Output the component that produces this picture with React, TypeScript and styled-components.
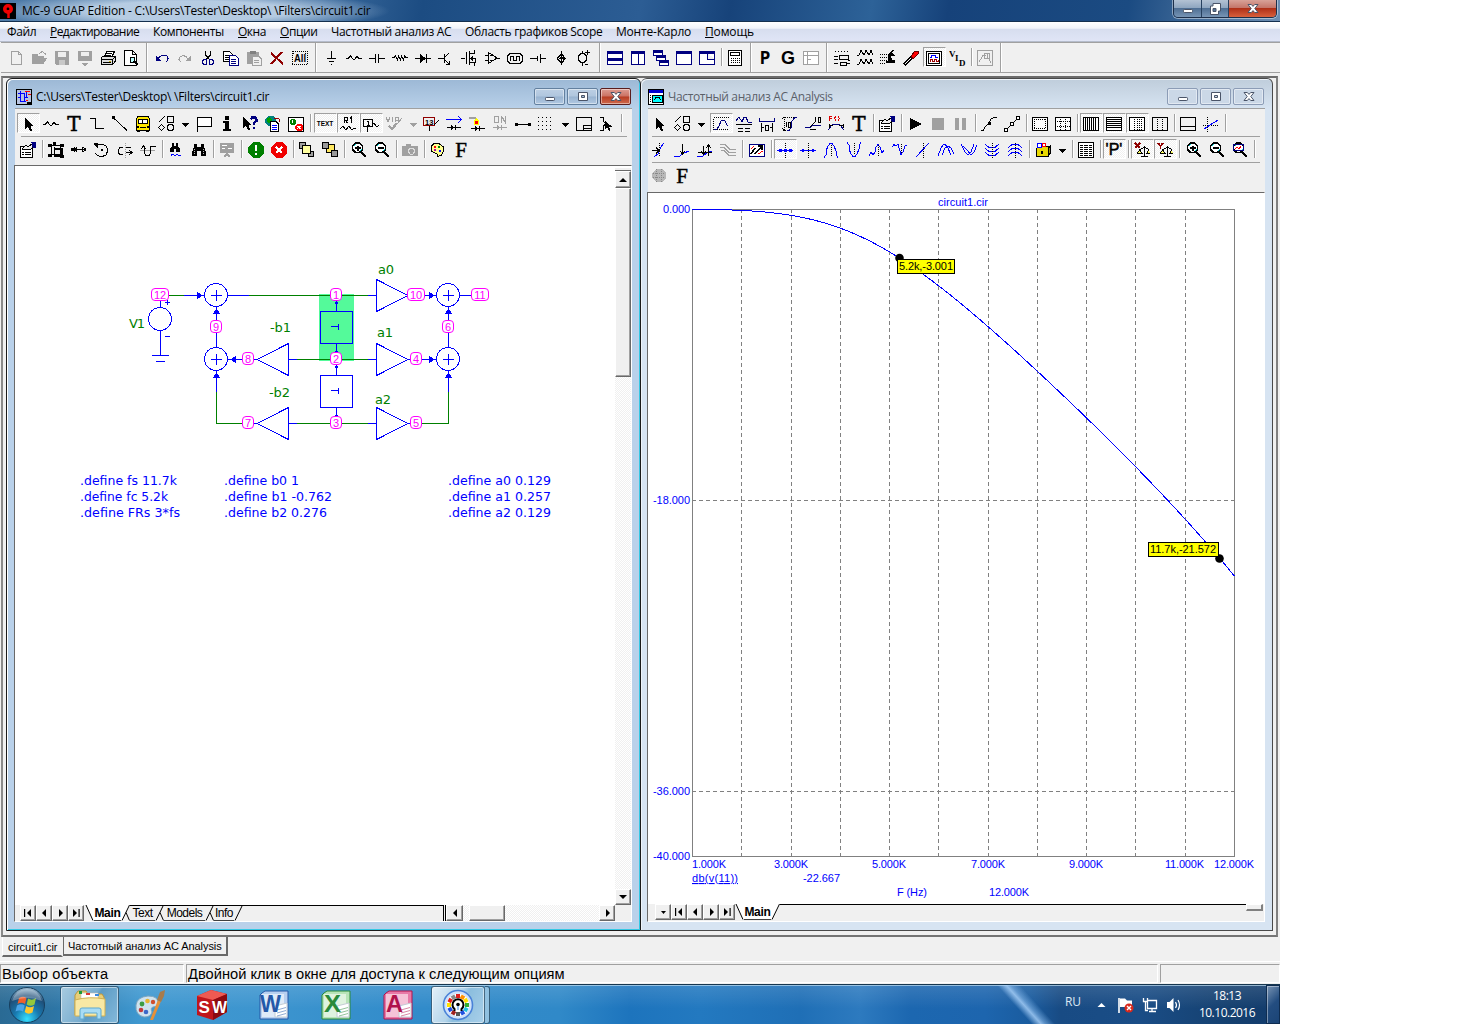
import React from "react";
import styled, { createGlobalStyle, css } from "styled-components";

const UI = `"Open Sans", "Noto Sans", sans-serif`;
const ARIAL = `"Liberation Sans", Arial, sans-serif`;
const FACE = "#f0f0f0";
const NAVY = "#000080";
const BLUE = "#0000ff";
const GREY = "#a0a0a0";
const GREEN = "#008000";

const Global = createGlobalStyle`
  body { margin: 0; background: #fff; }
  * { box-sizing: border-box; }
  svg { display: block; flex: none; }
`;

/* ---------- glyphs ---------- */
type Stroke = [d: string, stroke?: string, fill?: string, width?: number];

const magnifier: Stroke[] = [
  ["M4.500 1H8.500L11.500 4V7.500L8.500 10.500H4.500L1.500 7.500V4Z", "#000", "#fff", 1.7],
  ["M3 4L5 2.500M9 9L10.500 7.500", "#00d8d8"],
  ["M10 10L15 15", "#000", "none", 2.6],
];
const paper: Stroke[] = [["M3.500 1.500H10.500L13.500 4.500V14.500H3.500ZM10.500 1.500V4.500H13.500", GREY, FACE]];
const propSheet: Stroke[] = [
  ["M.5 4.500H12.500V15.500H.5Z", "#000", "#fff"],
  ["M5 10.500H11M5 12.500H11M2 10.500H4M2 12.500H4"],
  ["M2 7L6 3L8 5L13 1L15 3L11 7L7 8Z", "#000", "#eee"],
  ["M12 .5H16V5H13Z", NAVY, NAVY],
];
const binoc: Stroke[] = [["M3 2H6V5H10V2H13V5L15 10V14H10V9H6V14H1V10L3 5Z", "none", "#000"], ["M3.500 7V12M12.500 7V12", "#bbb", "none", -2]];
const shapes: Stroke[] = [
  ["M9.500 .5H15.500V6.500H9.500Z"],
  ["M.5 6.500L6.500 .5"],
  ["M.5 11.500L3.500 8.500L6.500 11.500L3.500 14.500Z"],
  ["M11 8.500H14L15.500 10V13L14 14.500H11L9.500 13V10Z"],
];
const cursor: Stroke[] = [["M5 1L5 13L8 10.500L10 15H12L10.500 10H13.500Z", "none", "#000"]];
const scales: Stroke[] = [["M10.500 4V14M7 14.500H14M6 7.500L10.500 5L15 7.500"], ["M5.500 8L3.500 11H8ZM14.500 8L13 11H16", "#000", "#ffff60"]];

const glyphs: Record<string, Stroke[]> = {
  new: paper,
  open: [["M1.500 13.500V4.500H6L7.500 6.500H12.500V8.500M1.500 13.500L5 8.500H15.500L12 13.500Z", GREY, GREY], ["M8 4L11 1.500L14 3.500V5", GREY]],
  save: [["M1 1H15V15H2L1 14Z", "none", GREY], ["M4 2H12V7H4Z", "none", "#eee"], ["M5 10H11V15H5Z", "none", "#c8c8c8"]],
  saveAs: [["M1 1H15V11H1Z", "none", GREY], ["M4 2H12V6H4Z", "none", "#eee"], ["M4 13H12L8 16Z", "none", GREY]],
  print: [["M4.500 6.500L7 1.500H14.500L12 6.500Z", "#000", "#fff"], ["M1.500 7.500L4 6H15.500V11L12.500 14.500H1.500Z", "#000", "#ddd"], ["M1 9.500H12.500L15 7M12.500 9V14M3 12.500H11M7 3.500H12M6 5.500H11", "#000"], ["M9 11.500H11", "#c8b400"]],
  preview: [["M1.500 .5H9.500L13.500 4.500V15.500H1.500ZM9.500 .5V4.500H13.500", "#000", "#fff"], ["M7.500 7.500H11.500V12.500H7.500Z", "#000", "#bff"], ["M11 11L15 15", "#000", "none", 2]],
  undo: [["M3 10L6 6.500L9 5L13 6L14 8.500L12.500 12", NAVY], ["M2 5L7 10.500H2Z", "none", NAVY]],
  redo: [["M12 10L9 6.500L6 5.500L3 7L2 9.500L4 12", GREY], ["M14 5L9 10.500H14Z", "none", GREY]],
  cut: [["M5.500 1V5L10 10M10.500 1V5L6 10", "#000", "none", 1.3], ["M4 9.500H6.500V14.500H4L2.500 13V11ZM9.500 9.500H12L13.500 11V13L12 14.500H9.500Z", NAVY, "none", 1.3]],
  copy: [["M.5 1.500H6.500L9.500 4.500V11.500H.5Z", "#000", "#fff"], ["M2 5.500H6M2 7.500H6M2 9.500H6"], ["M6.500 5.500H12.500L15.500 8.500V15.500H6.500Z", NAVY, "#fff"], ["M8 9.500H13M8 11.500H13M8 13.500H13", NAVY]],
  paste: [["M1 2H13V14H1Z", "none", GREY], ["M4 1H10V4H4Z", "none", "#808080"], ["M6.500 6.500H13L15.500 9V15.500H6.500Z", GREY, FACE], ["M8 10.500H13M8 12.500H13", GREY]],
  del: [["M2 3L14 14M13 2L2 14", "#900000", "none", 2]],
  ground: [["M8.500 1V8M4 8.500H13M6 11.500H11M8 14.500H9"]],
  resistor: [["M0 8.500H2L4.500 6L8 10L11 6.500L13 8.500H16"]],
  cap: [["M0 8.500H6M10 8.500H16M6.500 4V13M9.500 4V13"]],
  coil: [["M0 7.500H2L3.500 6L5.500 10L6.500 6L8.500 10L9.500 6L11.500 10L12.500 6L14 7.500H16"]],
  diode: [["M0 8.500H16M11.500 4V13"], ["M5 4L11 8.500L5 13Z", "none", "#000"]],
  bjt: [["M0 8.500H6M6.500 4V13M7 7L11 3M7 10L11 14M11.500 11V14.500H8"]],
  mos: [["M0 8.500H4M5.500 2V14M8.500 1V15M9 3.500H13V0M9 8.500H15M9 12.500H13V16M14.500 8V13"], ["M9 8.500L12 6V11Z", "none", "#000"]],
  opamp: [["M4.500 2.500V13.500L13 8Z"], ["M1 5.500H4M1 10.500H4M13 8.500H16M6 5.500H8M6 10.500H8"]],
  pulse: [["M3 3.500H13L15.500 6V11L13 13.500H3L.5 11V6Z"], ["M3.500 11V6.500H6.500V10.500H9.500V6.500H12.500V11"]],
  batt: [["M0 8.500H7M10 8.500H16M7.500 6V11M10.500 4V13"]],
  isrc: [["M8.500 1V15"], ["M8.500 4L12 8.500L8.500 13L4.500 8.500Z", "#000", "none", 1.4], ["M8.500 5L11 9H6Z", "none", "#000"]],
  vsrc: [["M6.500 3V1M6.500 13V16M5 3.500H8L10.500 6V10L8 12.500H5L2.500 10V6ZM9 2.500H14M11.500 0V5M9 14.500H12"]],
  tileH: [["M.5 1.500H15.500V14.500H.5Z", NAVY, "#fff"], ["M0 2H16M0 9H16", NAVY, "none", 3]],
  tileV: [["M1.500 1.500H14.500V14.500H1.500ZM8 2V14", NAVY, "#fff"], ["M1 2.500H15", NAVY, "none", 3]],
  cascade: [["M.5 .5H9.500V5.500H.5Z", NAVY, "#fff"], ["M0 1.500H10", NAVY, "none", 3], ["M3.500 5.500H12.500V10.500H3.500Z", NAVY, "#fff"], ["M3 6.500H13", NAVY, "none", 3], ["M6.500 10.500H15.500V15.500H6.500Z", NAVY, "#fff"], ["M6 11.500H16", NAVY, "none", 3]],
  maxi: [["M.5 1.500H15.500V14.500H.5Z", NAVY, "#fff"], ["M0 2.500H16", NAVY, "none", 3]],
  split: [["M.5 1.500H15.500V14.500H.5ZM8.500 3V9.500H16", NAVY, "#fff"], ["M0 2.500H16", NAVY, "none", 3]],
  calc: [["M1.500 .5H14.500V15.500H1.500Z", "#000", "#fff"], ["M3.500 2.500H12.500V5.500H3.500Z"], ["M4 8.500H13M4 10.500H13M4 12.500H13", "#000", "none", -2]],
  panel: [["M.5 1.500H15.500V14.500H.5ZM1 5.500H15M4.500 2V14M4.500 9.500H8", GREY, "#fff"]],
  list: [["M1 1.500H16", "#000", "none", -3], ["M5.500 5.500H14.500V9.500H5.500ZM6.500 12.500H12.500V15.500H6.500Z"], ["M0 6.500H4M0 9.500H4M0 13.500H4M12 13.500H16M14 10.500H16"]],
  waves: [["M0 5.500L2 5L4 .5L7 5L9 .5L12 5L14 .5L16 5M0 14.500L2 14L4 9.500L7 14L9 9.500L12 14L14 9.500L16 14"]],
  plug: [["M8 4L12 0H14L12 3L15 6H11L12 10H15V13H6V11H8Z", "none", "#000"], ["M0 4.500H7M0 7.500H7M0 10.500H7M0 13.500H6", "#000", "none", -2]],
  probe: [["M1 15L9 7", "#000", "none", 3], ["M2 14L8 8", "#fff"], ["M8 6L12 1H15V4L10 9Z", "#600", "#f00"]],
  scope: [["M.5 1.500H15.500V15.500H.5Z", "#000", "#fff"], ["M2.500 3.500H13.500V13.500H2.500Z", "#000", "#fff"], ["M4 7.500H5.500V5.500H9.500V7.500H12", BLUE], ["M4 11.500V9.500H6V11.500H8V9.500H10V11.500H12V9.500", "#a00000"]],
  stamp: [["M.5 .5H15.500V15.500H.5ZM2 12L6 5.500H9M7.500 3.500H12.500V8.500H7.500ZM12 9L14 13M10 8V4", GREY]],
  cursor,
  wire: [["M.5 2.500H6.500V12.500H15"]],
  line: [["M0 .5L15 14.500", "#000"], ["M0 0H3V3H0Z", "none", "#000"]],
  bus: [["M2.500 .5H13.500L14.500 3V14H1.500V3Z", "#000", "#ffe800"], ["M3.500 3.500H12.500V7.500H3.500Z", "#000", "#fff"], ["M7.500 3V8M5 11.500H11", "#000"], ["M2 10H4V12H2ZM12 10H14V12H12ZM2 14H5V16H2ZM11 14H14V16H11Z", "none", "#000"]],
  shapes,
  flag: [["M1.500 16V1.500H15.500V10.500H2", "#000", "#fff"]],
  info: [["M6 0H10V4H6ZM4 5H10V13H12V15H4V13H6V7H4Z", "none", "#000"]],
  help: [["M1 0V12L4 9.500L6 14H8L6.500 9H9Z", "none", "#000"], ["M9 3.500L10 1.500H13.500L14.500 3V5L12 7V9", NAVY, "none", 2.2], ["M11 11H13V13H11Z", "none", NAVY]],
  globeDoc: [["M3 0H9L11 3V8L8 10H3L0 7V3Z", "none", "#008080"], ["M2 2L5 1L7 4L4 7L2 6Z", "none", "#00a000"], ["M5.500 5.500H11L13.500 8V15.500H5.500Z", "#000", "#fff"], ["M7 9.500H12M7 11.500H12M7 13.500H12", BLUE], ["M9 2L14 3L15 6", "#900"]],
  checks: [["M.5 1.500H15.500V15.500H.5Z", "#000", "#fff"], ["M3 3H6L8 5V7L6 9H3L2 7V5Z", "none", GREEN], ["M9 8H13L15 10V13L13 15H9L7 13V10Z", "none", "#f00"], ["M9 10L13 13M13 10L9 13M4.500 4V7", "#fff"]],
  viewR: [["M0 13L3 10L6 14L9 10L12 14L14 12H16"], ["M4.500 7V1.500H7V4H5L7.500 7M10 2.500L11.500 1V7"]],
  node: [["M.5 3.500H9.500V10.500H.5ZM4.500 11V16M5.500 5V9M4 9.500H7M4 5.500H5", "#000"], ["M9 9L11 7L14 11L16 9"]],
  nodeNum: [["M.5 1.500H11.500V9.500H.5Z", "#900000", "none", 1.4], ["M6.500 10V15M11 9L16 4", "#000"]],
  vip: [["M3 10L6 13L11 7", GREY, "none", 2.4], ["M0 1L2 6L4 1M6.500 1V6M9.500 6V1.500H12V4H10M16 2L11 8", GREY]],
  curr: [["M0 3.500H15M12 0L15.500 3.500L12 7", BLUE, "none", 1.4], ["M1 11.500H15M9.500 9V14", "#000"], ["M5 9L9 11.500L5 14Z", "none", "#000"]],
  power: [["M0 1.500H5L8 4", GREY, "none", 2], ["M7 2L10 5V9H5V5Z", "none", "#ff0"], ["M6 5H9V8H6Z", "none", "#f00"], ["M2 12.500H16M10.500 10V15"], ["M6 10L10 12.500L6 15Z", "none", "#000"]],
  on: [["M2.500 .5H6.500V6.500H2.500ZM9.500 7V.5L13.500 6.500V0", GREY, "none", 1.4], ["M1 11.500H15M9.500 9V14", GREY], ["M5 9L9 11.500L5 14Z", "none", GREY]],
  seg: [["M1 8.500H15"], ["M0 7H3V10H0ZM13 7H16V10H13Z", "none", "#000"]],
  dots: [["M0 1.500H17M0 5.500H17M0 9.500H17M0 13.500H17", "#000", "none", -4]],
  region: [["M.5 1.500H15.500V14.500H.5ZM7.500 15V9.500H15M8 12.500H15", "#000"]],
  pick: [["M1 1H4V5L7 8L4 10V14H1", "#000"], ["M6 5V13L8 11.500L10 15L11.500 14L10 10.500H13Z", "none", "#000"]],
  props: propSheet,
  group: [["M3.500 3.500H12.500V12.500H3.500ZM6.500 5V14H14V7H6", "#000", "none", 1.3], ["M0 2H4V5H0ZM12 2H16V5H12ZM0 12H4V15H0ZM12 13H16V16H12ZM5 0H8V3H5Z", "none", "#000"]],
  flipX: [["M1 7.500H15M5 5V10M11 5V10", "#000"], ["M3 5L7 7.500L3 10ZM13 5L9 7.500L13 10ZM0 6H3V9H0ZM12 6H15V9H12Z", "none", "#000"]],
  rotate: [["M4 3L8 2L12 4L14 8L12 13L7 15L3 13L1 11"], ["M0 1H4V6L0 3ZM7 7H9V9H7Z", "none", "#000"]],
  flipA: [["M8.500 1V16", GREY, "none", -2], ["M6 5.500H3L1.500 8V11L3 12.500H6M9 10.500H15M12 8L15 10.500L12 13M9 5.500H14"]],
  flipB: [["M0 8.500H15", GREY], ["M1 7L3.500 4L6 7M4.500 5V11L6 13.500H9L10.500 11V5L12 4H16"]],
  find: [["M4 1H6V4H8V1H10V4L12 7V10H8V7H6V10H2V7L4 4Z", "none", "#000"], ["M3 13.500L5 12L7 14L9 12L11 14L13 13", BLUE]],
  binoc,
  board: [["M1 1H15V11H1Z", "none", GREY], ["M3 3.500H8M3 6.500H6M9 6.500H13", "#fff"], ["M8 11V13M5 15L8 12L11 15", GREY, "none", 2]],
  ok: [["M5 0H11L16 5V11L11 16H5L0 11V5Z", "none", GREEN], ["M8 3V9", "#fff", "none", 2.5], ["M7 11H9V13H7Z", "none", "#fff"]],
  bad: [["M5 0H11L16 5V11L11 16H5L0 11V5Z", "none", "#f00000"], ["M5 5L11 11M11 5L5 11", "#fff", "none", 2]],
  front: [["M9.500 9.500H14.500V14.500H9.500Z", "#000", GREY], ["M.5 .5H6.500V6.500H.5Z", "#000", GREY], ["M3.500 3.500H11.500V11.500H3.500Z", "#000", "#ffffa0"]],
  back: [["M4.500 2.500H12.500V10.500H4.500Z", "#000", "#ffe860"], ["M.5 .5H6.500V6.500H.5ZM9.500 8.500H15.500V14.500H9.500Z", "#000", "#999"]],
  zoomIn: [...magnifier, ["M4 6H9.500M6.700 3.500V8.500", "#000", "none", 1.6]],
  zoomOut: [...magnifier, ["M4 6H9.500", "#000", "none", 1.6]],
  zoomFit: [...magnifier, ["M1.500 2.500H11.500V8.500H1.500Z", NAVY], ["M3 7L5 5L7 7L9 4", "#f00"]],
  camera: [["M0 4H4V2H9V4H16V14H0Z", "none", GREY], ["M8.500 6H11L12.500 8V10L11 12H8L6.500 10V8Z", "#ddd"]],
  palette: [["M4 1.500H9L13.500 5V9L11.500 13L8 14.500L7 12L4 10.500L1.500 9V4Z", "#000", "#ffff90"], ["M4 4H6V6H4Z", "none", "#f00"], ["M8 4H10V6H8Z", "none", GREEN], ["M9 8H11V10H9Z", "none", BLUE], ["M4 7H6V9H4Z", "none", "#a0a"]],
  scaleMode: [["M.5 13.500V1.500H15.500M2 13.500H15", "#000", "none", -2], ["M1 13L4 13L6 10L8 5L10 4L12 5L14 9L15 10", NAVY]],
  cursorMode: [["M0 5L3 1L6 6L8 1L10 1L12 6H16", NAVY], ["M0 8.500H16M2 12.500H7M9 12.500H14M2 15.500H7M9 15.500H14"]],
  hTag: [["M.5 2V5.500H15.500V2", NAVY], ["M2.500 7V16M13.500 7V16M3 11.500H5M11 11.500H13"], ["M6.500 9.500H9.500V14.500H6.500Z"]],
  vTag: [["M15 1.500H13L10 5L9 12L7 14.500H5", NAVY], ["M2.500 1V15M0 3L2.500 1L5 3M0 12L2.500 15L5 12M3 1.500H12", "#000", "none", -2], ["M4.500 6V11M6.500 6.500H8.500V11H6.500Z"]],
  ptTag: [["M0 11.500H5L8 9H16", NAVY], ["M5 13.500H11M5 11L10 6M10.500 1V6M13.500 1.500H15.500V6H13.500Z"]],
  fTag: [["M0 14L4 9L8 8L12 9L16 14", NAVY], ["M1 8V12M1 9.500H5M15 8V12M11 9.500H15"], ["M1.500 5V.5H4M2 2.500H4M8 0L6.500 2.500L8 5M10 0L11.500 2.500L10 5", "#e00000"]],
  play: [["M3 2L15 8L3 14Z", "none", "#000"]],
  stop: [["M2 2H14V14H2Z", "none", GREY]],
  pause: [["M2 2H6V14H2ZM9 2H13V14H9Z", "none", GREY]],
  curve: [["M0 14.500H2L4 11L8 7L10 3L13 1.500H16"], ["M7 6H10V9H7Z", "none", "#000"]],
  curvePts: [["M2 14L14 2"], ["M.5 12.500H3.500V15.500H.5ZM6.500 6.500H9.500V9.500H6.500ZM12.500 .5H15.500V3.500H12.500Z", "#000", "#fff"]],
  ruler: [["M.5 1.500H15.500V14.500H.5Z", "#000", "#fff", 1.6], ["M2 3.500H14M2 12.500H14M2.500 3V13M13.500 3V13", "#000", "none", -2]],
  plusGrid: [["M.5 1.500H15.500V14.500H.5Z", "#000", "#fff"], ["M0 5.500H16M0 10.500H16M5.500 1V15M10.500 1V15", "#000", "none", -2]],
  gridV: [["M.5 1.500H15.500V14.500H.5ZM2.500 1V15M4.500 1V15M6.500 1V15M8.500 1V15M10.500 1V15M12.500 1V15", "#000", "#fff"]],
  gridH: [["M.5 1.500H15.500V14.500H.5ZM0 3.500H16M0 5.500H16M0 7.500H16M0 9.500H16M0 11.500H16", "#000", "#fff"]],
  gridDot: [["M.5 1.500H15.500V14.500H.5Z", "#000", "#fff"], ["M5.500 1V15M8.500 1V15M10.500 1V15M12.500 1V15", "#000", "none", -2]],
  gridDash: [["M.5 1.500H15.500V14.500H.5Z"], ["M5.500 1V15M10.500 1V15", "#000", "none", -2]],
  baseline: [["M.5 1.500H15.500V14.500H.5ZM1 10.500H15"]],
  hCursor: [["M4.500 1V16M0 9.500H16", "#000", "none", -2], ["M1 13L7 9L15 4", BLUE]],
  goX: [["M3 15L7 12L10 5L13 1", BLUE], ["M8.500 1V15", "#000", "none", -2], ["M1 8.500H8M5 5.500L8 8.500L5 11.500"]],
  goY: [["M0 14.500H5L10 11L15 9", BLUE], ["M8.500 2V12M6 9L8.500 12L11 9"]],
  goXY: [["M0 14.500H5L10 11L15 9", BLUE], ["M6.500 4V12M4 9L6.500 12L9 9M11.500 3V14M9 6L11.500 3L14 6M1 10.500H15"]],
  branch: [["M0 2.500H5L10 7.500H16M0 5.500H4L9 10.500H16M1 8.500H4L9 13.500H16", GREY]],
  anim: [["M.5 2.500H15.500V14.500H.5Z", NAVY, "#fff", 1.6], ["M2 12L6 6M6 12L13 4M9 4H13V8", "#000", "none", 1.6], ["M2 7L5 4M9 12L14 9", "#f00"]],
  trackPts: [["M8.500 1V16", "#000", "none", -2], ["M0 8.500H16", BLUE], ["M2 7H5V10H2ZM7 7H10V10H7ZM12 7H15V10H12Z", "none", BLUE]],
  trackPt: [["M8.500 1V16", "#000", "none", -2], ["M0 8.500H16", BLUE], ["M2 7H4V10H2ZM12 7H14V10H12Z", "none", BLUE]],
  peak: [["M1 15.500L3 13V9L5 4L7 1.500H9L11 4L13 9V13L15 15.500", BLUE], ["M8.500 3V15", "#000", "none", -2]],
  valley: [["M1 .5L3 3V7L5 12L7 14.500H9L11 12L13 7V3L15 .5", BLUE], ["M8.500 1V13", "#000", "none", -2]],
  high: [["M0 13.500L2 10L4 13L6 10L7 5L9 2.500L11 5L13 11L15 8", BLUE], ["M9.500 3V14", "#000", "none", -2]],
  low: [["M0 5L2 2.500L4 4L6 2.500L7 6L9 12.500L11 10L13 4L15 3", BLUE], ["M9.500 2V12", "#000", "none", -2]],
  inflect: [["M1 15L14 1", BLUE], ["M8.500 1V16", "#000", "none", -2]],
  gHigh: [["M0 14L3 6L6 2L9 4L13 13M4 13L7 6L10 4L13 6L16 12", BLUE]],
  gLow: [["M0 2L4 10L7 13L10 10L13 2M2 4L6 8L10 13L13 10L16 3", BLUE]],
  lowSet: [["M1 2L5 5.500H11L15 2M1 6L5 9.500H11L15 6M1 10L5 13.500H11L15 10", BLUE], ["M8.500 1V16", "#000", "none", -2]],
  highSet: [["M1 6L5 2.500H11L15 6M1 10L5 6.500H11L15 10M1 14L5 10.500H11L15 14", BLUE], ["M8.500 1V16", "#000", "none", -2]],
  cube: [["M1.500 6.500L4 4H15L13 6.500V14.500H1.500Z", "#000", "#e8d800"], ["M13 7L15.500 4V11L13 14Z", "#000", "#a09000"], ["M2 1H6V5H2Z", BLUE, "#fff"], ["M7 1H10V4H7Z", "#f00", "#fff"], ["M6 9H8V12H6Z", "none", "#000"]],
  table: [["M.5 .5H15.500V15.500H.5Z", "#000", "#fff"], ["M2 3.500H5M6 3.500H10M11 3.500H14M2 5.500H5M6 5.500H10M11 5.500H14M2 7.500H5M6 7.500H10M11 7.500H14M2 9.500H5M6 9.500H10M11 9.500H14M2 11.500H5M6 11.500H10M11 11.500H14M2 13.500H5M6 13.500H10M11 13.500H14"]],
  scaleX: [["M1 1L6 6M6 1L1 6", "#900000", "none", 1.8], ...scales],
  scaleY: [["M1 1L3.500 4L6 1M3.500 4V7", "#900000", "none", 1.8], ...scales],
  globe: [["M5 1H11L15 5V10L11 14H5L1 10V5Z", "none", "#b8b8b8"], ["M2 5.500H14M2 9.500H14M5.500 1V14M10.500 1V14", "#888", "none", -2]],
  drop: [["M5 7H12L8.500 11Z", "none", "#000"]],
  dropOff: [["M5 7H12L8.500 11Z", "none", GREY]],
  circuitApp: [["M.5 .5H15.500V15.500H.5Z", "#000", "#b8c4e0"], ["M2 4.500H8V12M4.500 2V12H10M8 8.500H12M10.500 3V9M2 8.500H5", BLUE], ["M9 2.500H14M12 5.500H15M10 11.500H12", "#f00"], ["M11 13H15V15H11Z", "none", "#000"]],
  chartApp: [["M.5 .5H15.500V15.500H.5Z", "#000", "#fff"], ["M1 1H15V4H1Z", "none", "#0000d0"], ["M4.500 6.500H14.500V13.500H4.500Z", "#000", "#0ff"], ["M6 11L8 8.500H11L13 11", "#000"], ["M2.500 6V14", "#000", "none", -2]],
};

const Letter = styled.span<{ $px: number; $family: string; $weight?: number }>`
  width: 16px;
  height: 16px;
  display: flex;
  align-items: center;
  justify-content: center;
  font: ${(p) => p.$weight ?? 700} ${(p) => p.$px}px/16px ${(p) => p.$family};
  white-space: nowrap;
  color: #000;
  -webkit-text-stroke: ${(p) => (p.$weight ? 0.5 : 0)}px #000;
`;
const lettered: Record<string, [text: string, px: number, family: string, weight?: number]> = {
  P: ["P", 17.5, `"DejaVu Sans Mono", "DejaVu Sans", sans-serif`],
  G: ["G", 18, ARIAL],
  F: ["F", 21, `"Liberation Serif", serif`, 400],
  T: ["T", 20, `"DejaVu Serif", serif`, 400],
  TEXT: ["TEXT", 6.5, ARIAL],
  "'P'": ["'P'", 16, ARIAL, 400],
};
const VidMark = styled.svg`
  font: bold 9px "Liberation Serif", serif;
`;

function Glyph({ name }: { name: string }) {
  const l = lettered[name];
  if (l) return <Letter $px={l[1]} $family={l[2]} $weight={l[3]}>{l[0]}</Letter>;
  if (name === "VID")
    return (
      <VidMark width="17" height="16">
        <text x="0" y="6.500">V</text>
        <text x="6" y="11">I</text>
        <text x="10" y="15.500">D</text>
      </VidMark>
    );
  if (name === "all")
    return (
      <svg width="16" height="16" viewBox="0 0 16 16">
        <path d="M.5 1.500H16M.5 3.500H3M13 3.500H16M0 14.500H16M.5 1V15M15.500 1V15" stroke="#000" strokeDasharray="1 1" shapeRendering="crispEdges" fill="none" />
        <text x="2" y="12" textLength="12" lengthAdjust="spacingAndGlyphs" fontFamily="Liberation Sans" fontWeight="bold" fontSize="10">All</text>
      </svg>
    );
  return (
    <svg width="16" height="16" viewBox="0 0 16 16" shapeRendering="crispEdges">
      {(glyphs[name] ?? []).map(([d, stroke = "#000", fill = "none", w = 1], i) => (
        <path key={i} d={d} stroke={stroke} fill={fill} strokeWidth={w < 0 ? 1 : w} strokeDasharray={w < 0 ? `1 ${Math.max(1, -w - 1)}` : undefined} />
      ))}
      {name === "nodeNum" && <text x="2" y="8.500" fontSize="7.500" fontFamily="Liberation Sans" fontWeight="bold">13</text>}
    </svg>
  );
}

/* ---------- toolbars ---------- */
const Tool = styled.div<{ $w?: number; $on?: boolean }>`
  width: ${(p) => p.$w ?? 23}px;
  height: 20px;
  padding: 3px 0 0 3px;
  flex: none;
  overflow: visible;
  ${(p) =>
    p.$on &&
    css`
      padding: 2px 0 0 2px;
      border: 1px solid #fff;
      border-top-color: #a0a0a0;
      border-left-color: #a0a0a0;
      background: repeating-conic-gradient(#fff 0 25%, #f0f0f0 0 50%) 0 0 / 2px 2px;
    `}
`;
const DropTool = styled(Tool)`
  padding-left: 0;
  overflow: hidden;
  svg { margin-left: -1px; }
`;
const Divider = styled.div<{ $w: number; $tall?: boolean }>`
  flex: none;
  width: ${(p) => p.$w}px;
  height: ${(p) => (p.$tall ? 29 : 18)}px;
  margin-top: ${(p) => (p.$tall ? -4 : 1)}px;
  display: flex;
  justify-content: center;
  &::before {
    content: "";
    width: 2px;
    background: linear-gradient(90deg, #a0a0a0 50%, #fff 50%);
  }
`;

/* "|n" is a divider n px wide, "||n" a full-height one, "+x" a pressed tool, "drop:n" a menu arrow */
function Tools({ items }: { items: string }) {
  return (
    <>
      {items.split(" ").map((t, i) => {
        if (t.startsWith("||")) return <Divider key={i} $w={+t.slice(2)} $tall />;
        if (t.startsWith("|")) return <Divider key={i} $w={+t.slice(1)} />;
        if (t.startsWith("drop")) {
          const [n, w] = t.split(":");
          return <DropTool key={i} $w={+w}><Glyph name={n} /></DropTool>;
        }
        const on = t.startsWith("+");
        return <Tool key={i} $on={on}><Glyph name={on ? t.slice(1) : t} /></Tool>;
      })}
    </>
  );
}

const ToolRow = styled.div<{ $line?: boolean }>`
  display: flex;
  height: 26px;
  padding: 2px 0 0;
  margin: 0 5px 0 0;
  background: ${(p) => (p.$line ? "linear-gradient(#a0a0a0, #a0a0a0) 4px 25px / 100% 1px no-repeat" : "none")};
`;
const ToolArea = styled.div<{ $h: number; $pad: number }>`
  height: ${(p) => p.$h}px;
  padding: 2px 0 0 ${(p) => p.$pad}px;
  border-top: 1px solid #a0a0a0;
  background: ${FACE};
`;

/* ---------- frame ---------- */
const Frame = styled.div`
  width: 1280px;
  height: 1024px;
  display: flex;
  flex-direction: column;
  overflow: hidden;
  background: ${FACE};
  color: #000;
`;
const TitleBar = styled.header`
  height: 22px;
  flex: none;
  display: flex;
  align-items: flex-start;
  border-bottom: 1px solid #14304f;
  background:
    radial-gradient(ellipse 200px 20px at 190px 11px, rgba(210, 226, 242, 0.8) 50%, rgba(180, 205, 230, 0) 100%),
    linear-gradient(100deg, #4e7ba8 0, #3a6a9d 25%, #1c4c82 33%, #2c5d94 50%, #17437a 57%, #2d6298 68%, #16427a 74%, #1b4b82 88%, #6d8fb3 100%);
`;
const AppIcon = styled.div`
  width: 16px;
  height: 16px;
  margin: 3px 6px 0 0;
  background: #000;
`;
const TitleText = styled.div`
  flex: 1;
  font: 12px/21px ${UI};
  letter-spacing: -0.2px;
  white-space: nowrap;
`;
const SysButtons = styled.div`
  display: flex;
  height: 18px;
  margin-right: 3px;
  border: 1px solid #1d2f4a;
  border-top: 0;
  border-radius: 0 0 5px 5px;
  overflow: hidden;
  box-shadow: 0 0 0 1px rgba(255, 255, 255, 0.45);
`;
const SysButton = styled.div<{ $w: number; $close?: boolean }>`
  width: ${(p) => p.$w}px;
  display: flex;
  align-items: center;
  justify-content: center;
  border-right: ${(p) => (p.$close ? "0" : "1px solid #26405f")};
  background: ${(p) => (p.$close ? "linear-gradient(#d8a298 0, #c4766a 45%, #b03018 50%, #d8603c 100%)" : "linear-gradient(#b3c2d4 0, #8fa6c0 45%, #4f6f94 50%, #7795b5 100%)")};
`;

const MenuBar = styled.nav`
  display: flex;
  height: 20px;
  flex: none;
  padding-left: 7px;
  background: linear-gradient(#fff 0, #f1f4fa 33%, #d7deef 38%, #e0e5f6 100%);
  border-bottom: 1px solid #b5bccb;
`;
const MenuItem = styled.div<{ $w: number; $ls: number }>`
  width: ${(p) => p.$w}px;
  font: 12px/20px ${UI};
  letter-spacing: ${(p) => p.$ls}px;
  white-space: nowrap;
`;
const MainTools = styled.div`
  display: flex;
  height: 31px;
  flex: none;
  padding: 4px 0 0 4px;
  border-top: 1px solid #a0a0a0;
  border-bottom: 1px solid #a0a0a0;
  margin-left: 1px;
  overflow: hidden;
`;

const Mdi = styled.main`
  display: flex;
  height: 861px;
  flex: none;
  margin: 3px 2px 0 1px;
  padding: 0 0 0 3px;
  border: 2px solid #8a8a8a;
  border-top-color: #6c6c6c;
  border-bottom-color: #747474;
  border-right-color: #808080;
`;
const Win = styled.section<{ $active?: boolean }>`
  height: 853px;
  flex: none;
  display: flex;
  flex-direction: column;
  border-radius: 6px 6px 0 0;
  ${(p) =>
    p.$active
      ? css`
          width: 635px;
          padding: 1px 8px 8px 8px;
          border: 1px solid #1a1a1a;
          background: linear-gradient(#9cb8d5 0, #b9d1ea 30px);
          box-shadow: inset 1px 1px 0 #fff, inset -1px -1px 0 #35c8e4;
        `
      : css`
          width: 632px;
          padding: 1px 7px 8px 7px;
          border: 1px solid #4a4a4a;
          border-left: 0;
          background: linear-gradient(#bfcddb 0, #d7e4f2 30px);
          box-shadow: inset 1px 1px 0 #eef4fa;
        `}
`;
const WinTitle = styled.div<{ $muted?: boolean; $ls: number }>`
  height: 28px;
  flex: none;
  display: flex;
  align-items: center;
  gap: 4px;
  padding: 5px 1px 0 ${(p) => (p.$muted ? 0 : 1)}px;
  font: 12px/18px ${UI};
  letter-spacing: ${(p) => p.$ls}px;
  color: ${(p) => (p.$muted ? "#5b6068" : "#000")};
  white-space: nowrap;
`;
const Grow = styled.div`
  flex: 1;
`;
const CapRow = styled.div`
  display: flex;
  gap: 2px;
`;
const Cap = styled.div<{ $kind: "plain" | "muted" | "close" }>`
  width: 31px;
  height: 17px;
  display: flex;
  align-items: center;
  justify-content: center;
  border-radius: 2px;
  border: 1px solid ${(p) => (p.$kind === "close" ? "#5a1d1d" : p.$kind === "plain" ? "#63809f" : "#8c9cb6")};
  box-shadow: inset 0 0 0 1px rgba(255, 255, 255, 0.45);
  background: ${(p) =>
    p.$kind === "close" ? "linear-gradient(#dd9c93 0, #cb7263 48%, #b73c23 52%, #cf6a4c 100%)" : p.$kind === "plain" ? "linear-gradient(#bccfe4 0, #b0c6de 48%, #98b3d0 52%, #b2c9e2 100%)" : "#cbd8e7"};
`;

function CapGlyph({ kind, color = "#4a5468" }: { kind: string; color?: string }) {
  return (
    <svg width="12" height="12" viewBox="0 0 12 12">
      {kind === "min" && <rect x="1.500" y="6.500" width="9" height="3" rx=".8" fill="#fff" stroke={color} />}
      {kind === "max" && <path d="M1.500 1.500H10.500V9.500H1.500ZM4.500 4.500H7.500V6.500H4.500Z" fill="#fff" fillRule="evenodd" stroke={color} />}
      {kind === "restore" && <path d="M4 .5H11.500V8H9.500V11.500H1.500V3H4ZM4 5.500V8.500H7V5.500Z" fill="#fff" fillRule="evenodd" stroke={color} />}
      {kind === "close" && <path d="M1 1.500H4.300L6 3.400L7.700 1.500H11L7.800 5.500L11 9.500H7.700L6 7.600L4.300 9.500H1L4.200 5.500Z" fill="#fff" stroke={color} />}
    </svg>
  );
}
function Caps({ kind }: { kind: "plain" | "muted" }) {
  return (
    <CapRow>
      <Cap $kind={kind}><CapGlyph kind="min" /></Cap>
      <Cap $kind={kind}><CapGlyph kind="max" /></Cap>
      <Cap $kind={kind === "plain" ? "close" : "muted"}><CapGlyph kind="close" /></Cap>
    </CapRow>
  );
}

/* ---------- views ---------- */
const Body = styled.div`
  flex: 1;
  min-height: 0;
  display: flex;
  flex-direction: column;
  border-top: 1px solid #696969;
  border-left: 1px solid #696969;
  margin-left: -1px;
  border-right: 1px solid #fff;
  border-bottom: 1px solid #fff;
  background: ${FACE};
`;
const ViewRow = styled.div`
  display: flex;
  flex: 1;
  min-height: 0;
`;
const Canvas = styled.div`
  background: #fff;
`;
const VScroll = styled.div`
  width: 16px;
  display: flex;
  flex-direction: column;
  background: repeating-conic-gradient(#fff 0 25%, #f0f0f0 0 50%) 0 0 / 2px 2px;
`;
const SplitGrip = styled.div`
  height: 5px;
  flex: none;
  background: ${FACE};
  border-top: 2px solid #fff;
  border-bottom: 1px solid #696969;
`;
const Raised = styled.div<{ $w: number; $h: number }>`
  width: ${(p) => p.$w}px;
  height: ${(p) => p.$h}px;
  flex: none;
  display: flex;
  align-items: center;
  justify-content: center;
  background: ${FACE};
  border: 1px solid #fff;
  border-right-color: #696969;
  border-bottom-color: #696969;
  box-shadow: inset -1px -1px 0 #a0a0a0;
`;
const HScroll = styled.div`
  width: 169px;
  display: flex;
  background: repeating-conic-gradient(#fff 0 25%, #f0f0f0 0 50%) 0 0 / 2px 2px;
`;
const TrackGap = styled.div`
  width: 6px;
`;
const SheetSplit = styled.div`
  width: 3px;
  border: 1px solid #000;
  border-width: 0 1px;
`;
const SheetRow = styled.div`
  height: 16px;
  flex: none;
  display: flex;
`;
const NavGroup = styled.div<{ $pad: number; $tail: number }>`
  display: flex;
  padding-left: ${(p) => p.$pad}px;
  padding-right: ${(p) => p.$tail}px;
`;
const SheetTab = styled.div<{ $w: number; $on?: boolean }>`
  width: ${(p) => p.$w}px;
  display: flex;
  justify-content: center;
  font: ${(p) => (p.$on ? "bold 12px" : "12px")} ${ARIAL};
  line-height: ${(p) => (p.$on ? 16 : 14)}px;
  letter-spacing: ${(p) => (p.$on ? -0.3 : -0.5)}px;
  white-space: nowrap;
  background: ${(p) => (p.$on ? "#fff" : FACE)};
  border-top: ${(p) => (p.$on ? "0" : "1px solid #000")};
  border-bottom: 1px solid #404040;
`;
const SheetFill = styled.div<{ $w: number }>`
  width: ${(p) => p.$w}px;
  border-top: 1px solid #000;
`;
const Knob = styled.div`
  width: 17px;
  height: 7px;
  border: 1px solid #fff;
  border-right: 2px solid #808080;
  border-bottom: 2px solid #808080;
`;

function Edge({ kind }: { kind: "start" | "mid" | "end" | "next" | "solo" }) {
  return (
    <svg width="9" height="16" viewBox="0 0 9 16">
      {kind === "start" && <path d="M1 0L8 15.500H9V0Z" fill="#fff" />}
      {(kind === "mid" || kind === "solo") && <path d="M9 0L1 15.500H0V0Z" fill="#fff" />}
      {kind !== "start" && <path d="M8.500 0L1 15.500" stroke="#000" fill="none" />}
      {kind === "start" && <path d="M1 0L8 15.500" stroke="#000" fill="none" />}
      {(kind === "mid" || kind === "next") && <path d="M5 7.500L8.500 15.500" stroke="#000" fill="none" />}
      {(kind === "next" || kind === "end") && <path d="M0 .5H9" stroke="#000" />}
    </svg>
  );
}
function Arrow({ kind }: { kind: string }) {
  const d: Record<string, string> = {
    left: "M7 1V9L3 5Z",
    right: "M4 1V9L8 5Z",
    up: "M1 7H9L5 3Z",
    down: "M1 3H9L5 7Z",
    first: "M1 1H2.200V9H1ZM8 1V9L4 5Z",
    last: "M2 1V9L6 5ZM7.500 1H8.700V9H7.500Z",
    small: "M3 4H8L5.500 7Z",
  };
  return <svg width="10" height="10" viewBox="0 0 10 10"><path d={d[kind]} /></svg>;
}
const Nav = ({ kinds }: { kinds: string[] }) => (
  <>{kinds.map((k) => <Raised key={k} $w={16} $h={16}><Arrow kind={k} /></Raised>)}</>
);

/* ---------- schematic ---------- */
const adders = [[216, 295], [448, 295], [216, 359], [448, 359]];
const nodes: [string, number, number][] = [["12", 160, 295], ["1", 336, 295], ["10", 416, 295], ["11", 480, 295], ["9", 216, 327], ["6", 448, 327], ["8", 248, 359], ["2", 336, 359], ["4", 416, 359], ["7", 248, 423], ["3", 336, 423], ["5", 416, 423]];
const names: [string, number, number, number][] = [["a0", 378, 274, 16], ["a1", 377, 337, 16], ["a2", 375, 404, 16], ["-b1", 270, 332, 21], ["-b2", 269, 397, 21], ["V1", 129, 328, 16]];
const defs: [string, number, number, number][] = [
  [".define fs 11.7k", 80, 485, 97], [".define fc 5.2k", 80, 501, 88], [".define FRs 3*fs", 80, 517, 100],
  [".define b0 1", 224, 485, 75], [".define b1 -0.762", 224, 501, 108], [".define b2 0.276", 224, 517, 103],
  [".define a0 0.129", 448, 485, 103], [".define a1 0.257", 448, 501, 103], [".define a2 0.129", 448, 517, 103],
];

function Schematic() {
  return (
    <svg width="600" height="739" viewBox="15 166 600 739">
      <g shapeRendering="crispEdges" fill="none" stroke={BLUE}>
        <path d="M319 294H354V361H319Z" fill="#54fa9a" stroke="none" />
        <path stroke={GREEN} d="M169 295.500H190M248 295.500H376M289 359.500H376M289 423.500H376M216.500 391V423.500H242M422 423.500H448.500V391" />
        <path d="M184 295.500H204M228 295.500H249M368 295.500H376M424 295.500H436M460 295.500H472M289 359.500H297M368 359.500H376M289 423.500H297M368 423.500H376M422 359.500H436M228 359.500H242M254 359.500H257M216.500 371V392M448.500 371V392M216.500 307V347M448.500 307V347M336.500 301V311M336.500 343V353M336.500 365V375M336.500 407V417M254 423.500H257M408 295.500H412M408 359.500H412M408 423.500H412" />
        <path d="M376.500 279.500V311.500L408 295.500ZM376.500 343.500V375.500L408 359.500ZM376.500 407.500V439.500L408 423.500ZM288.500 343.500V375.500L257 359.500ZM288.500 407.500V439.500L257 423.500Z" />
        <path d="M320.500 311.500H352.500V343.500H320.500ZM320.500 375.500H352.500V407.500H320.500Z" />
        <path d="M331 326.500H338M338.500 324V330M331 390.500H338M338.500 388V394" />
        <g fill={BLUE} stroke="none">
          <path d="M197 292V299L203 295.500ZM429 292V299L435 295.500ZM429 356V363L435 359.500ZM236 356V363L230 359.500Z" />
          <path d="M213 314H220L216.500 308ZM213 378H220L216.500 372ZM445 314H452L448.500 308ZM445 378H452L448.500 372Z" />
          <path d="M335 302H338V304H335ZM335 351H338V353H335ZM335 366H338V368H335ZM335 415H338V417H335Z" />
        </g>
        {adders.map(([x, y]) => (
          <g key={`${x}-${y}`}>
            <circle cx={x} cy={y} r="11.500" />
            <path d={`M${x - 5} ${y + 0.5}h11M${x + 0.5} ${y - 5}v11`} />
          </g>
        ))}
        <circle cx="160" cy="319" r="11.500" />
        <path d="M160.500 301V308M160.500 331V355M152 355.500H169M156 361.500H165M165 302.500H170M167.500 300V305M165 336.500H170" />
      </g>
      {nodes.map(([t, x, y]) => {
        const w = t.length > 1 ? 17 : 11;
        return (
          <g key={t}>
            <rect x={x - (w - 1) / 2 - 0.5} y={y - 6.500} width={w} height={12} rx="3.500" fill="#fff" stroke="#ff00ff" />
            <text x={x} y={y + 4} textAnchor="middle" fontFamily="Liberation Sans" fontSize="11" fill="#ff00ff">{t}</text>
          </g>
        );
      })}
      <g fontFamily="DejaVu Sans" fontSize="13">
        {names.map(([t, x, y, w]) => <text key={t} x={x} y={y} textLength={w} fill={GREEN}>{t}</text>)}
        {defs.map(([t, x, y, w]) => <text key={t} x={x} y={y} textLength={w} lengthAdjust="spacingAndGlyphs" fill={BLUE}>{t}</text>)}
      </g>
    </svg>
  );
}

/* ---------- frequency response ---------- */
const px = (khz: number) => 692.5 + ((khz - 1) * 542) / 11;
const py = (db: number) => 209.5 - (db * 647) / 40;
function gainDb(khz: number) {
  const w = (2 * Math.PI * khz) / 35.1;
  const num = Math.hypot(0.129 + 0.257 * Math.cos(w) + 0.129 * Math.cos(2 * w), 0.257 * Math.sin(w) + 0.129 * Math.sin(2 * w));
  const den = Math.hypot(1 - 0.762 * Math.cos(w) + 0.276 * Math.cos(2 * w), 0.762 * Math.sin(w) - 0.276 * Math.sin(2 * w));
  return 20 * Math.log10(num / den);
}
const response = Array.from({ length: 221 }, (_, i) => 1 + i / 20).map((f, i) => `${i ? "L" : "M"}${px(f).toFixed(2)} ${py(gainDb(f)).toFixed(2)}`).join("");
const plotText: [string, number, number, number][] = [
  ["circuit1.cir", 938, 206, 50], ["0.000", 663, 213, 27], ["-18.000", 653, 504, 37], ["-36.000", 653, 795, 37], ["-40.000", 653, 860, 37],
  ["1.000K", 692, 868, 34], ["3.000K", 774, 868, 34], ["5.000K", 872, 868, 34], ["7.000K", 971, 868, 34], ["9.000K", 1069, 868, 34],
  ["11.000K", 1165, 868, 39], ["12.000K", 1214, 868, 40], ["-22.667", 803, 882, 37], ["F (Hz)", 897, 896, 30], ["12.000K", 989, 896, 40],
];

function Plot() {
  return (
    <svg width="615" height="711" viewBox="648 193 615 711">
      <g shapeRendering="crispEdges" fill="none" stroke="#808080">
        {Array.from({ length: 10 }, (_, i) => <path key={i} strokeDasharray="4 3" d={`M${Math.floor(px(i + 2)) + 0.5} 209V856`} />)}
        <path strokeDasharray="4 3" d="M692 500.500H1234M692 791.500H1234" />
        <path d="M692.500 209.500H1234.500V856.500H692.500Z" />
        <path d={response} stroke={BLUE} />
      </g>
      <circle cx="899.500" cy="258" r="4.300" />
      <circle cx="1219.500" cy="558.500" r="4.300" />
      <g fill="#ffff00" stroke="#000">
        <rect x="897.500" y="259.500" width="57" height="14" />
        <rect x="1148.500" y="542.500" width="70" height="14" />
      </g>
      <g fontFamily="Liberation Sans" fontSize="11">
        <text x="899" y="270" textLength="54">5.2k,-3.001</text>
        <text x="1150" y="553" textLength="66">11.7k,-21.572</text>
        <g fill={BLUE}>
          {plotText.map(([t, x, y, w], i) => <text key={i} x={x} y={y} textLength={w}>{t}</text>)}
          <text x="692" y="882" textLength="46" textDecoration="underline">db(v(11))</text>
        </g>
      </g>
    </svg>
  );
}

/* ---------- bottom bars ---------- */
const DocTabs = styled.div`
  display: flex;
  height: 25px;
  flex: none;
  padding-left: 2px;
  border-bottom: 1px solid #fff;
`;
const DocTab = styled.div<{ $w: number; $on?: boolean }>`
  width: ${(p) => p.$w}px;
  height: ${(p) => (p.$on ? 20 : 19)}px;
  padding: ${(p) => (p.$on ? "2px 0 0 5px" : "1px 0 0 4px")};
  font: 11px/17px ${ARIAL};
  letter-spacing: ${(p) => (p.$on ? 0 : -0.07)}px;
  white-space: nowrap;
  border-bottom: 2px solid #696969;
  border-right: 2px solid ${(p) => (p.$on ? FACE : "#696969")};
  border-left: 1px solid ${(p) => (p.$on ? "#fff" : "#696969")};
`;
const StatusBar = styled.footer`
  display: flex;
  gap: 2px;
  height: 22px;
  flex: none;
  padding: 2px 0 1px;
`;
const Pane = styled.div<{ $w: number; $ls?: number }>`
  width: ${(p) => p.$w}px;
  padding-left: 1px;
  border: 1px solid #fff;
  border-top-color: #a0a0a0;
  border-left-color: #a0a0a0;
  font: 14.667px/18px ${ARIAL};
  letter-spacing: ${(p) => p.$ls ?? 0}px;
  white-space: nowrap;
`;
const Taskbar = styled.div`
  display: flex;
  align-items: center;
  height: 40px;
  flex: none;
  border-top: 1px solid #16364f;
  box-shadow: inset 0 1px 0 rgba(190, 220, 240, 0.7);
  background:
    linear-gradient(rgba(255, 255, 255, 0.12), rgba(255, 255, 255, 0) 60%),
    linear-gradient(90deg, #2a6a94 0, #2d75a5 55px, #3f98d0 140px, #3d95cf 260px, #318bca 420px, #3089c8 560px, #1d74bd 630px, #2379c0 700px, #1f6fb6 800px, #2d7abf 860px, #1c67b0 910px, #1d65ae 985px, #1a5c9f 1030px, #184b84 1060px, #1a4d86 1140px, #15406f 1230px, #123b6c 100%);
`;
const Slot = styled.div<{ $w: number; $gap?: number; $mode?: "open" | "front" }>`
  width: ${(p) => p.$w}px;
  height: 38px;
  margin-left: ${(p) => p.$gap ?? 0}px;
  flex: none;
  display: flex;
  align-items: center;
  justify-content: center;
  ${(p) =>
    p.$mode &&
    css`
      border: 1px solid rgba(20, 60, 90, 0.75);
      border-radius: 3px;
      box-shadow: inset 0 0 0 1px rgba(255, 255, 255, 0.5);
      background: ${p.$mode === "front" ? "linear-gradient(120deg, #e4f0f8, #b3d4ea 45%, #8cbede 55%, #a9d0ea)" : "linear-gradient(120deg, #a8cbe0, #78adcf 50%, #5d9cc5 55%, #84b9da)"};
    `}
`;
const StackEdge = styled.div`
  width: 5px;
  height: 38px;
  border: 1px solid rgba(20, 60, 90, 0.75);
  border-left: 0;
  border-radius: 0 3px 3px 0;
  background: #8fc0e0;
`;
const Streak = styled.div`
  width: 90px;
  height: 39px;
  margin-left: 492px;
  background: linear-gradient(48deg, transparent 42%, rgba(170, 210, 250, 0.8) 50%, rgba(130, 180, 230, 0.6) 54%, transparent 62%);
`;
const Tray = styled.div`
  display: flex;
  align-items: center;
  margin-left: auto;
  color: #fff;
  font: 12px/16px ${UI};
`;
const Lang = styled.span`
  margin: -6px 15px 0 0;
  letter-spacing: -0.1px;
  color: #dce8f4;
`;
const Clock = styled.div`
  width: 74px;
  padding-right: 4px;
  margin-top: -1px;
  text-align: center;
  line-height: 17px;
  letter-spacing: -0.5px;
`;
const ShowDesk = styled.div`
  width: 14px;
  height: 39px;
  border: 1px solid #0e2c50;
  box-shadow: inset 1px 1px 0 rgba(255, 255, 255, 0.4);
  background: linear-gradient(135deg, #7893b3, #234d80 50%, #1b4476);
`;

function Orb() {
  return (
    <svg width="38" height="38" viewBox="0 0 38 38">
      <defs>
        <radialGradient id="orb" cx=".5" cy=".9" r=".9">
          <stop offset="0" stopColor="#35e0ff" />
          <stop offset=".4" stopColor="#1879b0" />
          <stop offset=".75" stopColor="#1f4e78" />
          <stop offset="1" stopColor="#a4c3d8" />
        </radialGradient>
      </defs>
      <circle cx="19" cy="19" r="17.500" fill="url(#orb)" stroke="#173f5e" />
      <path d="M11 12Q15 9.500 18.500 12L17 18Q13.500 15.500 9.500 18Z" fill="#f0602c" />
      <path d="M20 12.500Q24 15 28 12L26.500 18.500Q22.500 21 18.700 18.500Z" fill="#94c83c" />
      <path d="M9 19.500Q13 17 16.700 19.500L15 25.500Q11.500 23.500 7.500 25.500Z" fill="#4aa4e8" />
      <path d="M18.200 20Q22 22.500 26 20L24.500 26.500Q20.500 29 16.700 26Z" fill="#fdc72e" />
      <path d="M4 15Q8 3 19 3Q30 3 34 15Q19 9 4 15Z" fill="#fff" opacity=".3" />
    </svg>
  );
}
function Explorer() {
  return (
    <svg width="34" height="34" viewBox="0 0 34 34">
      <path d="M2 7L5 3H13L15 6H29L31 9V27H2Z" fill="#e8cf78" stroke="#b9963c" />
      <path d="M8 5H25V12H8Z" fill="#fff" stroke="#bbb" strokeWidth=".6" />
      <path d="M6 3H9V6H6Z" fill="#1a9a3a" /><path d="M13 5H17V7H13Z" fill="#d33" /><path d="M22 6H26V8H22Z" fill="#3a8ae0" />
      <path d="M2 12Q16 8 32 11V28H2Z" fill="#f8e8a4" stroke="#d0b052" />
      <path d="M7 31V22Q7 20 9 20H26Q28 20 28 22V31H24V25H11V31Z" fill="#a8dcf4" stroke="#5fa9d0" />
    </svg>
  );
}
function Paint() {
  return (
    <svg width="34" height="34" viewBox="0 0 34 34">
      <path d="M3 17Q4 9 15 8Q26 8 25 16Q24 19 20 19Q17 20 19 24Q18 29 11 29Q2 27 3 17Z" fill="#cfe2ee" stroke="#7fa6bf" />
      <circle cx="9" cy="16" r="2.400" fill="#3c9c44" /><circle cx="14.500" cy="13" r="2.300" fill="#e8b430" /><circle cx="20" cy="14" r="2.200" fill="#d05030" /><circle cx="8" cy="22" r="2.300" fill="#c43c3c" /><circle cx="13" cy="24" r="2.300" fill="#3a68c8" />
      <path d="M17 32L25 12L28 13L20 32Z" fill="#e89038" />
      <path d="M24 12L27 4L32 2L31 8L28 14Z" fill="#a77b4c" />
    </svg>
  );
}
function SolidWorks() {
  return (
    <svg width="34" height="34" viewBox="0 0 34 34">
      <path d="M2 8L16 2L32 6V24L18 32L2 27Z" fill="#c0151b" />
      <path d="M2 8L16 2L32 6L18 12Z" fill="#ee5a52" />
      <path d="M18 12L32 6V24L18 32Z" fill="#8c0a10" />
      <g fontFamily="Liberation Sans" fontWeight="bold" fontSize="17" fill="#fff"><text x="3.500" y="24.500">S</text><text x="17" y="25" textLength="15" lengthAdjust="spacingAndGlyphs">W</text></g>
    </svg>
  );
}
function Office({ letter, color, tint }: { letter: string; color: string; tint: string }) {
  return (
    <svg width="32" height="32" viewBox="0 0 32 32">
      <path d="M4 4L7 2H30V30H2V6Z" fill={tint} stroke={color} />
      <path d="M4 5H26V28H4Z" fill="#fff" opacity=".55" />
      <path d="M17 17L29 14V28H17Z" fill="#fff" stroke="#c4ccd4" />
      <path d="M19 21L28 18.500M19 24L28 21.500M19 27L28 24.500" stroke={color} opacity=".5" />
      <text x="12.500" y="23" textAnchor="middle" fontFamily="Liberation Sans" fontWeight="bold" fontSize="23" fill={color} textLength={letter === "W" ? 21 : 17} lengthAdjust="spacingAndGlyphs">{letter}</text>
    </svg>
  );
}
function MicroCap() {
  const hues = ["#e02020", "#ff9000", "#ffe000", "#30b030", "#20c0e0", "#2050e0", "#555", "#a02020", "#2050e0", "#ffe000", "#e02020", "#888"];
  return (
    <svg width="32" height="32" viewBox="0 0 32 32">
      <circle cx="16" cy="16" r="14.500" fill="#cfe2fa" stroke="#4a82d8" strokeWidth="1.600" />
      <circle cx="16" cy="16" r="11.300" fill="#fff" />
      {hues.map((c, i) => <rect key={i} x="14" y="5" width="4" height="4" fill={c} transform={`rotate(${i * 30} 16 16)`} />)}
      <path d="M12.500 22V20A5.500 5.500 0 1 1 19.500 20V22" fill="none" stroke="#000" strokeWidth="2" />
      <circle cx="16" cy="15.500" r="1.800" /><path d="M15 17H17V21H15Z" fill="#9cc4f4" />
    </svg>
  );
}
function TrayIcons() {
  return (
    <svg width="96" height="20" viewBox="1096 995 96 20">
      <path d="M1097.500 1007H1105.500L1101.500 1003Z" fill="#fff" />
      <path d="M1119 998V1013" stroke="#fff" strokeWidth="1.600" /><path d="M1120 998.500H1125L1127 1000.500H1132V1007H1120Z" fill="#fff" />
      <circle cx="1129" cy="1008" r="4.500" fill="#d8281c" /><path d="M1127 1006L1131 1010M1131 1006L1127 1010" stroke="#fff" strokeWidth="1.400" />
      <path d="M1147.500 1000.500H1156.500V1008.500H1147.500ZM1149 1011.500H1156M1152 1009V1011M1143.500 998V1001.500H1147.500V998M1145.500 1002V1010.500H1148" fill="none" stroke="#fff" strokeWidth="1.300" />
      <path d="M1167 1002H1169.500L1173.500 998V1012L1169.500 1008H1167Z" fill="#fff" /><path d="M1175.500 1002Q1177.500 1005 1175.500 1008M1178 1000Q1181 1005 1178 1010" fill="none" stroke="#fff" strokeWidth="1.200" />
    </svg>
  );
}

const menus: [text: string, width: number, underlined: boolean, spacing: number][] = [
  ["Файл", 43, false, -0.4], ["Редактирование", 103, true, -0.57], ["Компоненты", 85, false, -0.4], ["Окна", 42, true, -0.5], ["Опции", 51, true, -0.4],
  ["Частотный анализ AC", 134, false, -0.32], ["Область графиков Scope", 151, false, -0.3], ["Монте-Карло", 89, false, -0.2], ["Помощь", 60, true, -0.15],
];

export default function App() {
  return (
    <Frame>
      <Global />
      <TitleBar>
        <AppIcon>
          <svg width="16" height="16"><path d="M8.500 7L8.500 15" stroke="#f00000" strokeWidth="2.500" /><circle cx="8" cy="6" r="3.200" fill="none" stroke="#f00000" strokeWidth="3.600" /></svg>
        </AppIcon>
        <TitleText>MC-9 GUAP Edition - C:\Users\Tester\Desktop\ \Filters\circuit1.cir</TitleText>
        <SysButtons>
          <SysButton $w={28}><CapGlyph kind="min" /></SysButton>
          <SysButton $w={27}><CapGlyph kind="restore" /></SysButton>
          <SysButton $w={47} $close><CapGlyph kind="close" /></SysButton>
        </SysButtons>
      </TitleBar>
      <MenuBar>
        {menus.map(([t, w, u, ls]) => <MenuItem key={t} $w={w} $ls={ls}>{u ? <><u>{t[0]}</u>{t.slice(1)}</> : t}</MenuItem>)}
      </MenuBar>
      <MainTools>
        <Tools items="new open save saveAs print preview ||8 undo redo cut copy paste del all ||8 ground resistor cap coil diode bjt mos opamp pulse batt isrc vsrc ||8 tileH tileV cascade maxi split |5 calc ||7 P G panel ||8 list waves plug probe +scope VID |5 stamp ||8" />
      </MainTools>
      <Mdi>
        <Win $active>
          <WinTitle $ls={-0.26}>
            <Glyph name="circuitApp" />
            C:\Users\Tester\Desktop\ \Filters\circuit1.cir
            <Grow />
            <Caps kind="plain" />
          </WinTitle>
          <ToolArea $h={57} $pad={2}>
            <ToolRow $line>
              <Tools items="+cursor resistor T wire line bus shapes drop:15 flag info help globeDoc checks |6 +TEXT +viewR +node vip dropOff:14 nodeNum curr power on seg dots drop:15 region pick |5" />
            </ToolRow>
            <ToolRow>
              <Tools items="props |5 group flipX rotate flipA flipB |5 find binoc |5 board |6 ok bad |5 front back |6 zoomIn zoomOut |5 camera |5 palette F" />
            </ToolRow>
          </ToolArea>
          <Body>
            <ViewRow>
              <Canvas><Schematic /></Canvas>
              <VScroll>
                <SplitGrip />
                <Raised $w={16} $h={17}><Arrow kind="up" /></Raised>
                <Raised $w={16} $h={189} />
                <Grow />
                <Raised $w={16} $h={16}><Arrow kind="down" /></Raised>
              </VScroll>
            </ViewRow>
            <SheetRow>
              <NavGroup $pad={5} $tail={1}><Nav kinds={["first", "left", "right", "last"]} /></NavGroup>
              <Edge kind="start" />
              <SheetTab $w={27} $on>Main</SheetTab>
              <Edge kind="mid" />
              <SheetTab $w={25}>Text</SheetTab>
              <Edge kind="next" />
              <SheetTab $w={41}>Models</SheetTab>
              <Edge kind="next" />
              <SheetTab $w={20}>Info</SheetTab>
              <Edge kind="end" />
              <SheetFill $w={200} />
              <SheetSplit />
              <HScroll>
                <Raised $w={17} $h={16}><Arrow kind="left" /></Raised>
                <TrackGap />
                <Raised $w={36} $h={16} />
                <Grow />
                <Raised $w={16} $h={16}><Arrow kind="right" /></Raised>
              </HScroll>
            </SheetRow>
          </Body>
        </Win>
        <Win>
          <WinTitle $muted $ls={-0.35}>
            <Glyph name="chartApp" />
            Частотный анализ AC Analysis
            <Grow />
            <Caps kind="muted" />
          </WinTitle>
          <ToolArea $h={84} $pad={0}>
            <ToolRow $line>
              <Tools items="cursor shapes drop:16 +scaleMode cursorMode hTag vTag ptTag fTag T |5 props |5 play stop pause |5 curve curvePts |5 ruler plusGrid |5 +gridV +gridH +gridDot gridDash |5 baseline hCursor |5" />
            </ToolRow>
            <ToolRow $line>
              <Tools items="goX goY goXY branch |6 anim |5 +trackPts trackPt peak valley high low inflect gHigh gLow lowSet highSet |5 cube drop:15 |5 table |5 +'P' |5 +scaleX +scaleY |6 zoomIn zoomOut zoomFit |5" />
            </ToolRow>
            <ToolRow>
              <Tools items="globe F" />
            </ToolRow>
          </ToolArea>
          <Body>
            <Canvas><Plot /></Canvas>
            <SheetRow>
              <NavGroup $pad={7} $tail={0}><Nav kinds={["small", "first", "left", "right", "last"]} /></NavGroup>
              <Edge kind="start" />
              <SheetTab $w={27} $on>Main</SheetTab>
              <Edge kind="solo" />
              <SheetFill $w={466} />
              <Knob />
            </SheetRow>
          </Body>
        </Win>
      </Mdi>
      <DocTabs>
        <DocTab $w={61} $on>circuit1.cir</DocTab>
        <DocTab $w={165}>Частотный анализ AC Analysis</DocTab>
      </DocTabs>
      <StatusBar>
        <Pane $w={184} $ls={0.2}>Выбор объекта</Pane>
        <Pane $w={972}>Двойной клик в окне для доступа к следующим опциям</Pane>
        <Pane $w={120} />
      </StatusBar>
      <Taskbar>
        <Slot $w={54}><Orb /></Slot>
        <Slot $w={59} $gap={6} $mode="open"><Explorer /></Slot>
        <Slot $w={62}><Paint /></Slot>
        <Slot $w={62}><SolidWorks /></Slot>
        <Slot $w={62}><Office letter="W" color="#2458a8" tint="#b8d0f0" /></Slot>
        <Slot $w={62}><Office letter="X" color="#2a8a3a" tint="#b8e4b8" /></Slot>
        <Slot $w={62}><Office letter="A" color="#b0124c" tint="#e87aa8" /></Slot>
        <Slot $w={54} $gap={2} $mode="front"><MicroCap /></Slot>
        <StackEdge />
        <Streak />
        <Tray>
          <Lang>RU</Lang>
          <TrayIcons />
          <Clock>18:13<br />10.10.2016</Clock>
          <ShowDesk />
        </Tray>
      </Taskbar>
    </Frame>
  );
}
